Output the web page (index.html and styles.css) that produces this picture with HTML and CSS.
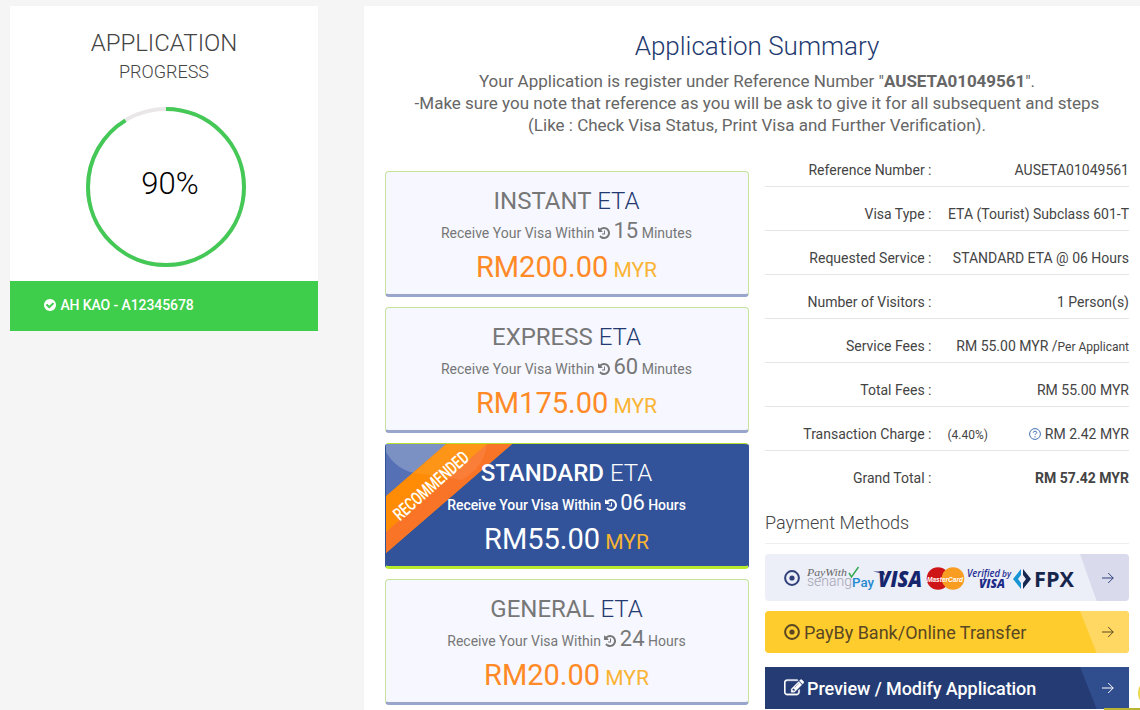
FILE: index.html
```html
<!DOCTYPE html>
<html lang="en">
<head>
  <meta charset="UTF-8">
  <meta name="viewport" content="width=device-width, initial-scale=1.0">
  <title>Application Summary</title>
  <link rel="stylesheet" href="styles.css">
</head>
<body>
  <!-- Shared icons -->
  <svg class="sprite" viewBox="0 0 1792 1792">
    <symbol id="history" viewBox="128 128 1536 1536"><path d="M1664 896q0 156-61 298t-164 245-245 164-298 61q-172 0-327-72.500t-264-204.500q-7-10-6.500-22.500t8.500-20.500l137-138q10-9 25-9 16 2 23 12 73 95 179 147t225 52q104 0 198.500-40.500t163.500-109.500 109.500-163.500 40.500-198.500-40.500-198.500-109.500-163.500-163.500-109.500-198.500-40.500q-98 0-188 35.500t-160 101.500l137 138q31 30 14 69-17 40-59 40h-448q-26 0-45-19t-19-45v-448q0-42 40-59 39-17 69 14l130 129q107-101 244.500-156.500t284.500-55.500q156 0 298 61t245 164 164 245 61 298zm-640-288v448q0 14-9 23t-23 9h-320q-14 0-23-9t-9-23v-64q0-14 9-23t23-9h224v-352q0-14 9-23t23-9h64q14 0 23 9t9 23z"/></symbol>
    <symbol id="check" viewBox="128 128 1536 1536"><path d="M1412 734q0-28-18-46l-91-90q-19-19-45-19t-45 19l-408 407-226-226q-19-19-45-19t-45 19l-91 90q-18 18-18 46 0 27 18 45l362 362q19 19 45 19 27 0 46-19l543-543q18-18 18-45zm252 162q0 209-103 385.500t-279.500 279.500-385.500 103-385.500-103-279.500-279.500-103-385.500 103-385.500 279.500-279.500 385.500-103 385.500 103 279.500 279.500 103 385.500z"/></symbol>
    <symbol id="edit" viewBox="0 0 1792 1792"><path d="M888 1184l116-116-152-152-116 116v56h96v96h56zm440-720q-16-16-33 1l-350 350q-17 17-1 33t33-1l350-350q17-17 1-33zm80 594v190q0 119-84.500 203.500t-203.500 84.500h-832q-119 0-203.500-84.500t-84.500-203.500v-832q0-119 84.500-203.500t203.500-84.500h832q63 0 117 25 15 7 18 23 3 17-9 29l-49 49q-14 14-32 8-23-6-45-6h-832q-66 0-113 47t-47 113v832q0 66 47 113t113 47h832q66 0 113-47t47-113v-126q0-13 9-22l64-64q15-15 35-7t20 29zm-96-738l288 288-672 672h-288v-288zm444 132l-92 92-288-288 92-92q28-28 68-28t68 28l152 152q28 28 28 68t-28 68z" stroke="currentColor" stroke-width="30"/></symbol>
    <symbol id="dot" viewBox="0 0 16 16"><circle cx="8" cy="8" r="6.9" fill="none" stroke="currentColor" stroke-width="2"/><circle cx="8" cy="8" r="2.6"/></symbol>
    <symbol id="arrow" viewBox="0 0 12 12"><path d="M0 6h11.300M6.200 1l5 5-5 5" fill="none" stroke="currentColor"/></symbol>
  </svg>

  <div class="page">
    <aside class="sidebar">
      <div class="progress">
        <h2>APPLICATION</h2>
        <h3>PROGRESS</h3>
        <div class="ring">
          <svg viewBox="0 0 160 160">
            <circle class="track" cx="80" cy="80" r="78"/>
            <circle class="bar" cx="80" cy="80" r="78" pathLength="100" transform="rotate(-90 80 80)"/>
          </svg>
          <span>90%</span>
        </div>
      </div>
      <div class="applicant"><svg class="icon"><use href="#check"/></svg> AH KAO - A12345678</div>
    </aside>

    <main class="main">
      <h1>Application Summary</h1>
      <p class="intro">Your Application is register under Reference Number "<b>AUSETA01049561</b>".<br>
        -Make sure you note that reference as you will be ask to give it for all subsequent and steps<br>
        (Like : Check Visa Status, Print Visa and Further Verification).</p>

      <div class="columns">
        <!-- Service plans -->
        <div class="plans">
          <div class="plan">
            <h4>INSTANT <span>ETA</span></h4>
            <p class="within">Receive Your Visa Within <svg class="icon"><use href="#history"/></svg> <big>15</big> Minutes</p>
            <p class="price">RM200.00 <small>MYR</small></p>
          </div>
          <div class="plan">
            <h4>EXPRESS <span>ETA</span></h4>
            <p class="within">Receive Your Visa Within <svg class="icon"><use href="#history"/></svg> <big>60</big> Minutes</p>
            <p class="price">RM175.00 <small>MYR</small></p>
          </div>
          <div class="plan active">
            <svg class="ribbon" viewBox="0 0 128 112">
              <path d="M0 0H61L0 53Z" fill="#5570b4"/>
              <path d="M0 0H61L28 29Q10 25 0 8Z" fill="#7c91c3"/>
              <path d="M60 0H126L0 109V52Z" fill="#ff8c04"/>
              <path d="M101 0H126L0 109V88Z" fill="#fa7428"/>
              <path d="M60 0H101Q100 12 90 25L76 36 28 29Z" fill="#fff" opacity="0.080"/>
              <text transform="translate(14 77.500) rotate(-41.500)" textLength="94" lengthAdjust="spacingAndGlyphs">RECOMMENDED</text>
            </svg>
            <h4>STANDARD <span>ETA</span></h4>
            <p class="within">Receive Your Visa Within <svg class="icon"><use href="#history"/></svg> <big>06</big> Hours</p>
            <p class="price">RM55.00 <small>MYR</small></p>
          </div>
          <div class="plan">
            <h4>GENERAL <span>ETA</span></h4>
            <p class="within">Receive Your Visa Within <svg class="icon"><use href="#history"/></svg> <big>24</big> Hours</p>
            <p class="price">RM20.00 <small>MYR</small></p>
          </div>
        </div>

        <!-- Fees and payment -->
        <div class="summary">
          <div class="row"><span class="label">Reference Number :</span><span class="value">AUSETA01049561</span></div>
          <div class="row"><span class="label">Visa Type :</span><span class="value">ETA (Tourist) Subclass 601-T</span></div>
          <div class="row"><span class="label">Requested Service :</span><span class="value">STANDARD ETA @ 06 Hours</span></div>
          <div class="row"><span class="label">Number of Visitors :</span><span class="value">1 Person(s)</span></div>
          <div class="row"><span class="label">Service Fees :</span><span class="value">RM 55.00 MYR /<small>Per Applicant</small></span></div>
          <div class="row"><span class="label">Total Fees :</span><span class="value">RM 55.00 MYR</span></div>
          <div class="row"><span class="label">Transaction Charge :</span><small class="rate">(4.40%)</small><span class="value"><svg class="help" viewBox="0 0 12 12"><circle cx="6" cy="6" r="5.400"/><path d="M4.200 4.700q.2-1.500 1.800-1.500 1.700 0 1.700 1.400 0 .8-1 1.300-.7.400-.7 1.100M6 8.100v1.300"/></svg> RM 2.42 MYR</span></div>
          <div class="row last"><span class="label">Grand Total :</span><b class="value">RM 57.42 MYR</b></div>

          <h5>Payment Methods</h5>
          <a class="pay cards">
            <svg class="icon"><use href="#dot"/></svg>
            <svg class="logos" viewBox="0 0 272 30">
              <text class="paywith" x="0" y="12.500" textLength="40" lengthAdjust="spacingAndGlyphs">PayWith</text>
              <path d="M42 10l2.500 4 7-10" fill="none" stroke="#35a852" stroke-width="1.500"/>
              <text class="senang" x="0" y="23" textLength="45" lengthAdjust="spacingAndGlyphs">senang</text>
              <text class="senang-pay" x="45" y="23.500" textLength="22" lengthAdjust="spacingAndGlyphs">Pay</text>
              <text class="visa" x="71" y="24" textLength="44" lengthAdjust="spacingAndGlyphs">VISA</text>
              <path d="M66 8.500h11l1 4q-4-3-12-4z" fill="#17256c"/>
              <circle cx="131" cy="15.500" r="11.300" fill="#cf1417"/>
              <circle cx="146" cy="15.500" r="11.300" fill="#f99c22"/>
              <text class="master" x="120" y="19" textLength="36" lengthAdjust="spacingAndGlyphs">MasterCard</text>
              <text class="verified" x="160" y="14" textLength="33" lengthAdjust="spacingAndGlyphs">Verified</text>
              <text class="verified by" x="195" y="14" textLength="9" lengthAdjust="spacingAndGlyphs">by</text>
              <text class="vbv" x="172" y="25" textLength="26" lengthAdjust="spacingAndGlyphs">VISA</text>
              <path d="M214 6l-8 10 8 10v-6l-3-4 3-4z" fill="#1795d4"/>
              <path d="M216 6l8 10-8 10v-6l3-4-3-4z" fill="#16284f"/>
              <text class="fpx" x="227" y="24" textLength="40" lengthAdjust="spacingAndGlyphs">FPX</text>
            </svg>
            <span class="go"><svg><use href="#arrow"/></svg></span>
          </a>
          <a class="pay bank">
            <svg class="icon"><use href="#dot"/></svg> PayBy Bank/Online Transfer
            <span class="go"><svg><use href="#arrow"/></svg></span>
          </a>
          <a class="pay preview">
            <svg class="icon"><use href="#edit"/></svg> Preview / Modify Application
            <span class="go"><svg><use href="#arrow"/></svg></span>
          </a>
        </div>
      </div>
    </main>
  </div>

  <!-- Chat widget, mostly outside the window -->
  <div class="chat"></div>
  <div class="chat-line"></div>
</body>
</html>
```
FILE: styles.css
```css
* {
  box-sizing: border-box;
}
body {
  margin: 0;
  height: 710px;
  overflow: hidden;
  background: #f5f5f5;
  color: #444;
  font-family: Roboto, "Liberation Sans", sans-serif;
  font-size: 14px;
}
h1, h2, h3, h4, h5, p {
  margin: 0;
  font-weight: 300;
}
.sprite {
  display: none;
}
.icon {
  width: 12px;
  height: 12px;
  fill: currentColor;
}
.page {
  display: flex;
  gap: 46px;
  padding: 6px 0 0 10px;
}

/* Sidebar */
.sidebar {
  width: 308px;
  flex: none;
}
.progress {
  height: 275px;
  padding-top: 22px;
  background: #fff;
  text-align: center;
}
.progress h2 {
  font-size: 24px;
  line-height: 30px;
}
.progress h3 {
  font-size: 18px;
  line-height: 28px;
}
.ring {
  display: grid;
  width: 160px;
  height: 160px;
  margin: 21px 0 0 76px;
}
.ring svg, .ring span {
  grid-area: 1 / 1;
}
.ring span {
  padding-left: 8px;
  color: #000;
  font-size: 31px;
  font-weight: 300;
  line-height: 153px;
}
.track, .bar {
  fill: none;
  stroke: #e9e7e8;
  stroke-width: 4;
}
.bar {
  stroke: #44c856;
  stroke-dasharray: 91.3 100;
}
.applicant {
  height: 50px;
  padding-left: 34px;
  background: #3fcd4c;
  color: #fff;
  font-weight: 500;
  letter-spacing: -0.1px;
  line-height: 48px;
}
.applicant .icon {
  margin-right: 1px;
  vertical-align: -1px;
}

/* Main panel */
.main {
  flex: 1;
  height: 704px;
  padding: 25px 12px 0 21px;
  background: #fff;
}
h1 {
  color: #233a70;
  font-size: 26px;
  line-height: 30px;
  text-align: center;
}
.intro {
  margin-top: 9px;
  color: #666;
  font-size: 17px;
  font-weight: 400;
  line-height: 22px;
  text-align: center;
}
.intro b {
  font-weight: 700;
  letter-spacing: -0.05px;
}
.columns {
  display: grid;
  grid-template-columns: 364px 364px;
  gap: 16px;
}

/* Plans */
.plans {
  display: flex;
  flex-direction: column;
  gap: 10px;
  padding-top: 35px;
}
.plan {
  position: relative;
  flex: none;
  height: 126px;
  padding: 14px 1px 0 0;
  border: 1px solid #c8e49c;
  border-bottom: 3px solid #99a5cb;
  border-radius: 4px;
  background: #f6f7ff;
  color: #777;
  text-align: center;
}
.plan > * {
  position: relative;
}
.plan h4 {
  font-size: 24px;
  font-weight: 400;
  line-height: 30px;
}
.plan h4 span {
  color: #233a70;
  font-weight: 300;
}
.within {
  font-weight: 400;
  line-height: 30px;
}
.within .icon {
  vertical-align: -1px;
}
.within big {
  font-size: 22px;
  font-weight: 400;
}
.price {
  color: #ff8a26;
  font-size: 29px;
  font-weight: 400;
  line-height: 39px;
}
.price small {
  margin-left: -2px;
  color: #fab433;
  font-size: 21px;
}
.plan.active {
  border-color: #b5e02d #325399 #b8ea2e;
  background: #325399;
  color: #fff;
}
.active h4, .active .within {
  font-weight: 500;
}
.active .within {
  letter-spacing: -0.05px;
}
.active h4 span, .active .price {
  color: #fff;
}
.plan .ribbon {
  position: absolute;
  top: 0;
  left: 0;
  width: 128px;
  height: 112px;
  overflow: visible;
}
.ribbon text {
  fill: #fff;
  font-size: 18px;
  font-weight: 500;
}

/* Summary */
.summary {
  padding-top: 7px;
}
.row {
  display: flex;
  align-items: baseline;
  height: 44px;
  padding-top: 19px;
  border-bottom: 1px solid #e5e5e5;
  line-height: 17px;
}
.row.last {
  border-bottom: 0;
}
.label {
  width: 166.5px;
  text-align: right;
}
.value {
  margin-left: auto;
}
.row small {
  font-size: 12px;
}
.rate {
  margin-left: 16px;
}
.help {
  width: 12px;
  height: 12px;
  vertical-align: -1px;
  fill: none;
  stroke: #4470b0;
}
h5 {
  height: 49px;
  border-bottom: 1px solid #eee;
  font-size: 18px;
  line-height: 56px;
}
.pay {
  display: flex;
  align-items: center;
  position: relative;
  height: 42px;
  padding-left: 19px;
  overflow: hidden;
  border-radius: 4px;
  font-size: 18px;
}
.pay .icon {
  width: 16px;
  height: 16px;
  margin-right: 4px;
}
.cards {
  height: 47px;
  margin: 10px 0;
  background: #eceef8;
  color: #31417c;
}
.logos {
  width: 272px;
  height: 30px;
  margin-left: 3px;
}
.bank {
  background: #ffcc2e;
  color: #594722;
}
.preview {
  margin-top: 14px;
  border-radius: 0;
  background: #243b74;
  color: #fff;
  font-weight: 500;
  letter-spacing: -0.07px;
}
.preview .icon {
  width: 20px;
  height: 20px;
  margin-right: 3px;
}
.go {
  display: flex;
  align-items: center;
  align-self: stretch;
  width: 49px;
  margin-left: auto;
  padding-left: 22px;
  background: #d9dbed;
  clip-path: polygon(0 0, 100% 0, 100% 100%, 34% 100%);
}
.go svg {
  width: 12px;
  height: 12px;
}
.bank .go {
  background: #ffd863;
}
.preview .go {
  background: #304d8e;
}

/* Payment logos */
.paywith {
  fill: #666;
  font: italic 11px "Liberation Serif", serif;
}
.senang {
  fill: #a4a4b2;
  font-size: 15px;
  font-weight: 300;
}
.senang-pay {
  fill: #2589d0;
  font-size: 13px;
  font-weight: 500;
}
.visa {
  fill: #17256c;
  font: italic 800 22px "Open Sans", sans-serif;
}
.master {
  fill: #fff;
  font: italic 700 8px "Liberation Sans", sans-serif;
}
.verified {
  fill: #222d91;
  font: italic 600 11px "Open Sans", sans-serif;
}
.vbv {
  fill: #1c2b88;
  font: italic 800 12px "Open Sans", sans-serif;
}
.verified.by {
  font-size: 9px;
}
.fpx {
  fill: #17264c;
  font: 700 21px "Open Sans", sans-serif;
}

.chat {
  position: absolute;
  top: 678px;
  left: 1138px;
  width: 30px;
  height: 30px;
  border: 2px solid #e8d84a;
  border-radius: 15px;
}
.chat-line {
  position: absolute;
  top: 708px;
  left: 1104px;
  width: 36px;
  height: 2px;
  background: #b9b532;
}
```
